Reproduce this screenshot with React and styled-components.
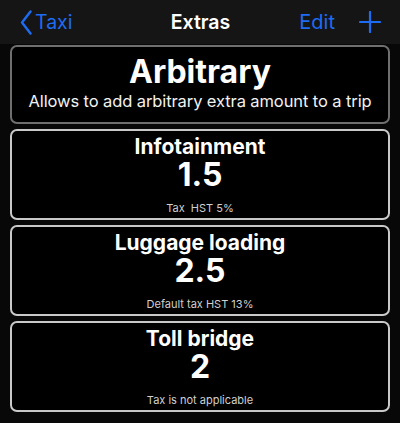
import React from 'react';
import styled, { createGlobalStyle } from 'styled-components';

const GlobalStyle = createGlobalStyle`
    html, body {
        margin: 0;
        padding: 0;
        background: #080808;
    }
    body {
        font-family: Inter, "Noto Sans", sans-serif;
        color: #fff;
    }
`;

const Screen = styled.div`
    width: 400px;
    height: 423px;
    display: flex;
    flex-direction: column;
    background: #080808;
    overflow: hidden;
`;

const NavBar = styled.header`
    height: 44px;
    flex-shrink: 0;
    background: #151515;
    display: grid;
    grid-template-columns: 1fr auto 1fr;
    align-items: center;
    padding: 0 19px 0 20px;
`;

const BackButton = styled.button`
    display: flex;
    align-items: center;
    gap: 3px;
    background: none;
    border: none;
    padding: 0;
    color: #1d6cf2;
    font-family: inherit;
    font-size: 19.5px;
    justify-self: start;
    cursor: pointer;
`;

const Title = styled.h1`
    margin: 0;
    font-size: 19.5px;
    font-weight: 600;
    color: #fff;
`;

const Actions = styled.div`
    justify-self: end;
    display: flex;
    align-items: center;
    gap: 24px;
`;

const TextButton = styled.button`
    background: none;
    border: none;
    padding: 0;
    color: #1d6cf2;
    font-family: inherit;
    font-size: 20px;
    cursor: pointer;
`;

const IconButton = styled.button`
    display: flex;
    background: none;
    border: none;
    padding: 0;
    cursor: pointer;
`;

const List = styled.main`
    display: flex;
    flex-direction: column;
    gap: 5px;
    padding: 1px 10px 0;
`;

const Card = styled.section`
    box-sizing: border-box;
    height: ${p => p.$height}px;
    border: 2px solid ${p => p.$muted ? '#6f6f6f' : '#c9c9c9'};
    border-radius: 7px;
    background: #000;
    display: flex;
    flex-direction: column;
    align-items: center;
    padding: ${p => p.$muted ? '6px 4px 0' : '4px 6px 3px'};
`;

const BigName = styled.div`
    font-size: 32px;
    line-height: 38px;
    font-weight: 700;
`;

const Description = styled.div`
    font-size: 16.5px;
    line-height: 20px;
    color: #f2f2f2;
    letter-spacing: -0.1px;
    white-space: nowrap;
`;

const Name = styled.div`
    font-size: 21px;
    line-height: 24px;
    font-weight: 700;
`;

const Amount = styled.div`
    font-size: 32px;
    line-height: 32px;
    font-weight: 700;
`;

const Note = styled.div`
    margin-top: auto;
    font-size: 11px;
    line-height: 14px;
    color: #d0d0d0;
`;

const extras = [
    { name: 'Infotainment', amount: '1.5', note: 'Tax\u00a0\u00a0HST 5%' },
    { name: 'Luggage loading', amount: '2.5', note: 'Default tax HST 13%' },
    { name: 'Toll bridge', amount: '2', note: 'Tax is not applicable' },
];

const App = () => {
    return (
        <Screen>
            <GlobalStyle />
            <NavBar>
                <BackButton>
                    <svg width="12" height="25" viewBox="0 0 12 25">
                        <path d="M10.5 1.5 L2 12.5 L10.5 23.5" fill="none" stroke="#1d6cf2" strokeWidth="2.4" strokeLinecap="round" strokeLinejoin="round" />
                    </svg>
                    Taxi
                </BackButton>
                <Title>Extras</Title>
                <Actions>
                    <TextButton>Edit</TextButton>
                    <IconButton>
                        <svg width="22" height="22" viewBox="0 0 22 22">
                            <path d="M11 1 V21 M1 11 H21" stroke="#1d6cf2" strokeWidth="2.2" strokeLinecap="round" />
                        </svg>
                    </IconButton>
                </Actions>
            </NavBar>
            <List>
                <Card $muted $height={79}>
                    <BigName>Arbitrary</BigName>
                    <Description>Allows to add arbitrary extra amount to a trip</Description>
                </Card>
                {extras.map(e => (
                    <Card key={e.name} $height={91}>
                        <Name>{e.name}</Name>
                        <Amount>{e.amount}</Amount>
                        <Note>{e.note}</Note>
                    </Card>
                ))}
            </List>
        </Screen>
    );
};

export default App;
